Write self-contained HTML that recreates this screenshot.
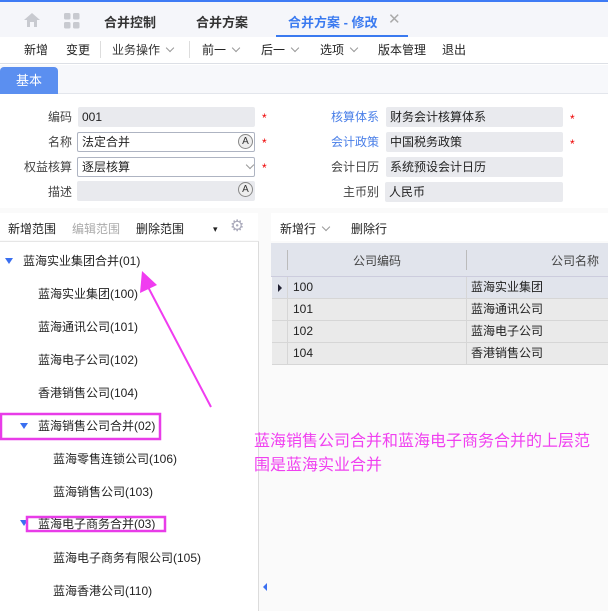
<!DOCTYPE html><html><head><meta charset="utf-8"><style>
*{margin:0;padding:0;box-sizing:border-box}
body{width:608px;height:611px;position:relative;overflow:hidden;background:#fff;font-family:"Liberation Sans","Noto Sans CJK SC",sans-serif;font-size:12px;color:#222}
.a{position:absolute;white-space:nowrap}
.lbl{position:absolute;text-align:right;color:#444;font-size:12px}
.in{position:absolute;height:20px;background:#e9eaee;border-radius:2px;padding-left:4px;line-height:20px;font-size:12px}
.st{position:absolute;color:#e00;font-size:12px}
.chev{display:inline-block;width:6px;height:6px;border-right:1px solid #999;border-bottom:1px solid #999;transform:rotate(45deg);margin-left:7px;position:relative;top:-3px}
.tb{position:absolute;top:41px;font-size:12px;white-space:nowrap}
.tr{position:absolute;font-size:12px;white-space:nowrap}
.tri{position:absolute;width:0;height:0;border-left:4px solid transparent;border-right:4px solid transparent;border-top:6px solid #3a6ff0}
.A{position:absolute;width:15px;height:15px;border-radius:50%;border:1px solid #888;background:#eee;font-size:10px;text-align:center;line-height:13px;color:#333}
.row{position:absolute;left:272px;width:336px;height:22px;border-bottom:1px solid #d6d6d6;background:#eaeaea;font-size:12px;line-height:21px}
.row span{position:absolute}
</style></head><body>
<div class="a" style="left:0;top:0;width:608px;height:2px;background:#3e7bf5"></div>
<div class="a" style="left:0;top:2px;width:608px;height:35px;background:#f5f6fa"></div>
<svg class="a" style="left:23px;top:12px" width="18" height="16"><path d="M9 1 L17 8 H14 V15 H11 V10 H7 V15 H4 V8 H1 Z" fill="#c8cad0"/></svg>
<svg class="a" style="left:64px;top:13px" width="16" height="16"><rect x="0" y="0" width="6.5" height="6.5" rx="1.5" fill="#c8cad0"/><rect x="9" y="0" width="6.5" height="6.5" rx="1.5" fill="#c8cad0"/><rect x="0" y="9" width="6.5" height="6.5" rx="1.5" fill="#c8cad0"/><rect x="9" y="9" width="6.5" height="6.5" rx="1.5" fill="#c8cad0"/></svg>
<div class="a" style="left:104px;top:12px;font-size:13px;font-weight:bold;color:#333">合并控制</div>
<div class="a" style="left:196px;top:12px;font-size:13px;font-weight:bold;color:#333">合并方案</div>
<div class="a" style="left:288px;top:12px;font-size:13px;font-weight:bold;color:#3a7af0">合并方案 - 修改</div>
<div class="a" style="left:388px;top:10px;font-size:15px;color:#aaa">✕</div>
<div class="a" style="left:276px;top:35px;width:132px;height:2px;background:#3a7af0"></div>
<div class="a" style="left:0;top:37px;width:608px;height:27px;background:#fff;border-bottom:1px solid #dde0e6"></div>
<div class="tb" style="left:24px">新增</div>
<div class="tb" style="left:66px">变更</div>
<div class="a" style="left:100px;top:41px;width:1px;height:17px;background:#ddd"></div>
<div class="tb" style="left:112px;color:#333">业务操作<span class="chev"></span></div>
<div class="a" style="left:189px;top:41px;width:1px;height:17px;background:#ddd"></div>
<div class="tb" style="left:202px">前一<span class="chev"></span></div>
<div class="tb" style="left:261px">后一<span class="chev"></span></div>
<div class="tb" style="left:320px">选项<span class="chev"></span></div>
<div class="tb" style="left:378px">版本管理</div>
<div class="tb" style="left:442px">退出</div>
<div class="a" style="left:0;top:65px;width:608px;height:29px;background:#f7f8fb;border-bottom:1px solid #e3e6ec"></div>
<div class="a" style="left:0;top:67px;width:58px;height:27px;background:#5b8ff0;border-radius:4px 4px 0 0;color:#fff;font-size:13px;text-align:center;line-height:27px">基本</div>

<div class="lbl" style="left:0;width:72px;top:108px">编码</div>
<div class="in" style="left:78px;top:107px;width:177px">001</div><div class="st" style="left:262px;top:111px">*</div>
<div class="lbl" style="left:0;width:72px;top:133px">名称</div>
<div class="in" style="left:77px;top:132px;width:178px;background:#fff;border:1px solid #aeb4c2;line-height:18px">法定合并</div><div class="A" style="left:238px;top:134px">A</div><div class="st" style="left:262px;top:136px">*</div>
<div class="lbl" style="left:0;width:72px;top:158px">权益核算</div>
<div class="in" style="left:77px;top:157px;width:178px;background:#fff;border:1px solid #aeb4c2;line-height:18px">逐层核算</div><div class="a" style="left:240px;top:160px"><span class="chev" style="border-color:#999"></span></div><div class="st" style="left:262px;top:161px">*</div>
<div class="lbl" style="left:0;width:72px;top:183px">描述</div>
<div class="in" style="left:77px;top:181px;width:178px"></div><div class="A" style="left:238px;top:182px">A</div>

<div class="lbl" style="left:300px;width:79px;top:108px;color:#4a7fe8">核算体系</div>
<div class="in" style="left:386px;top:107px;width:177px">财务会计核算体系</div><div class="st" style="left:570px;top:112px">*</div>
<div class="lbl" style="left:300px;width:79px;top:133px;color:#4a7fe8">会计政策</div>
<div class="in" style="left:386px;top:132px;width:177px">中国税务政策</div><div class="st" style="left:570px;top:137px">*</div>
<div class="lbl" style="left:300px;width:79px;top:158px">会计日历</div>
<div class="in" style="left:386px;top:157px;width:177px">系统预设会计日历</div>
<div class="lbl" style="left:300px;width:79px;top:183px">主币别</div>
<div class="in" style="left:385px;top:182px;width:178px">人民币</div>

<div class="a" style="left:0;top:208px;width:608px;height:403px;background:#fafafa"></div>
<div class="a" style="left:0;top:213px;width:258px;height:27px;background:#fff"></div>
<div class="a" style="left:8px;top:220px">新增范围</div>
<div class="a" style="left:72px;top:220px;color:#aaa">编辑范围</div>
<div class="a" style="left:136px;top:220px">删除范围</div>
<div class="a" style="left:213px;top:224px;font-size:9px">▾</div>
<div class="a" style="left:230px;top:216px;font-size:16px;color:#aab">⚙</div>
<div class="a" style="left:0;top:241px;width:259px;height:370px;background:#fff;border-right:1px solid #dcdcdc;border-top:1px solid #e6e6e6"></div>
<div class="tri" style="left:5px;top:258px"></div>
<div class="tr" style="left:23px;top:252px">蓝海实业集团合并(01)</div>
<div class="tr" style="left:38px;top:285px">蓝海实业集团(100)</div>
<div class="tr" style="left:38px;top:318px">蓝海通讯公司(101)</div>
<div class="tr" style="left:38px;top:351px">蓝海电子公司(102)</div>
<div class="tr" style="left:38px;top:384px">香港销售公司(104)</div>
<div class="tri" style="left:20px;top:423px"></div>
<div class="tr" style="left:38px;top:417px">蓝海销售公司合并(02)</div>
<div class="tr" style="left:53px;top:450px">蓝海零售连锁公司(106)</div>
<div class="tr" style="left:53px;top:483px">蓝海销售公司(103)</div>
<div class="tri" style="left:20px;top:520px"></div>
<div class="tr" style="left:38px;top:515px">蓝海电子商务合并(03)</div>
<div class="tr" style="left:53px;top:549px">蓝海电子商务有限公司(105)</div>
<div class="tr" style="left:53px;top:582px">蓝海香港公司(110)</div>

<div class="a" style="left:271px;top:213px;width:337px;height:28px;background:#fff"></div>
<div class="a" style="left:280px;top:220px">新增行<span class="chev"></span></div>
<div class="a" style="left:351px;top:220px">删除行</div>
<div class="a" style="left:271px;top:243px;width:337px;height:34px;background:#e1e4ec;border-bottom:1px solid #ccd"></div>
<div class="a" style="left:287px;top:250px;width:1px;height:20px;background:#bbb"></div>
<div class="a" style="left:466px;top:250px;width:1px;height:20px;background:#bbb"></div>
<div class="a" style="left:353px;top:252px;color:#444">公司编码</div>
<div class="a" style="left:551px;top:252px;color:#444">公司名称</div>
<div class="row" style="top:277px;background:#e1e4ec"><span style="left:21px">100</span><span style="left:199px">蓝海实业集团</span></div>
<div class="row" style="top:299px"><span style="left:21px">101</span><span style="left:199px">蓝海通讯公司</span></div>
<div class="row" style="top:321px"><span style="left:21px">102</span><span style="left:199px">蓝海电子公司</span></div>
<div class="row" style="top:343px"><span style="left:21px">104</span><span style="left:199px">香港销售公司</span></div>
<div class="a" style="left:287px;top:277px;width:1px;height:88px;background:#d6d6d6"></div>
<div class="a" style="left:466px;top:277px;width:1px;height:88px;background:#d6d6d6"></div>
<div class="a" style="left:278px;top:284px;width:0;height:0;border-top:4px solid transparent;border-bottom:4px solid transparent;border-left:4px solid #223"></div>
<div class="a" style="left:263px;top:583px;width:0;height:0;border-top:4px solid transparent;border-bottom:4px solid transparent;border-right:4px solid #3a6ff0"></div>

<svg class="a" style="left:0;top:0" width="608" height="611">
<line x1="211" y1="407" x2="147" y2="285" stroke="#f03cf0" stroke-width="2"/>
<polygon points="142,271 140,293 157,285" fill="#f03cf0"/>
<rect x="1" y="414" width="159" height="25" fill="none" stroke="#e83ce8" stroke-width="2.5"/>
<rect x="27" y="517" width="138" height="14" fill="none" stroke="#e83ce8" stroke-width="2.5"/>
</svg>
<div class="a" style="left:254px;top:430px;font-size:16px;color:#f040f0;line-height:24px;white-space:normal;width:345px">蓝海销售公司合并和蓝海电子商务合并的上层范围是蓝海实业合并</div>
</body></html>
